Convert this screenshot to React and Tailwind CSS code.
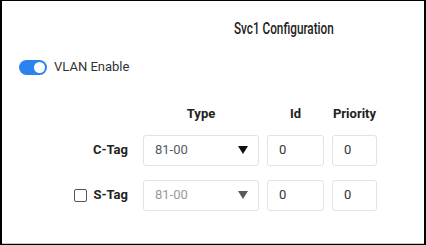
import { useState } from 'react';

function Toggle({ on }) {
  return (
    <div className={`w-[28px] h-[15px] rounded-full flex items-center px-[2px] ${on ? 'bg-[#2b83f0] justify-end' : 'bg-gray-300 justify-start'}`}>
      <div className="w-[11px] h-[11px] rounded-full bg-white" />
    </div>
  );
}

function Select({ value, disabled }) {
  return (
    <div className="w-[116px] h-[31px] border border-[#e2e2e2] rounded-[3px] flex items-center justify-between pl-[11px] pr-[10px]">
      <span className={`text-[13px] ${disabled ? 'text-[#9a9a9a]' : 'text-[#555a63]'}`}>{value}</span>
      <svg width="10" height="8" viewBox="0 0 10 8">
        <path d="M0 0 L10 0 L5 8 Z" fill={disabled ? '#5a5a5a' : '#111'} />
      </svg>
    </div>
  );
}

function Box({ value, w }) {
  return (
    <div className={`${w} h-[31px] border border-[#e2e2e2] rounded-[3px] flex items-center pl-[11px] text-[13px] text-[#333]`}>
      {value}
    </div>
  );
}

export default function App() {
  const [stag] = useState(false);

  return (
    <div className="w-[426px] h-[245px] bg-white font-['Roboto',sans-serif] border-l-2 border-r-2 border-t border-b border-black">
      <div className="h-full flex flex-col border-b border-[#c8c8c8]">
        <div className="pl-[232px] pt-[16px] h-[48px]">
          <span className="inline-block origin-left scale-x-[0.69] font-['Roboto',sans-serif] font-medium text-[17px] leading-[20px] text-[#222] whitespace-nowrap">
            Svc1 Configuration
          </span>
        </div>

        <div className="flex items-center gap-[7px] pl-[17px] h-[36px]">
          <Toggle on />
          <span className="text-[13px] text-[#333]">VLAN Enable</span>
        </div>

        <div className="flex pt-[19px] text-[13px] font-bold text-[#222]">
          <div className="w-[141px]" />
          <div className="w-[116px] text-center">Type</div>
          <div className="w-[8px]" />
          <div className="w-[57px] text-center">Id</div>
          <div className="w-[8px]" />
          <div className="w-[45px] text-center">Priority</div>
        </div>

        <div className="flex flex-col gap-[14px] pt-[11px]">
          <div className="flex items-center gap-[8px]">
            <div className="w-[133px] text-right pr-[7px] text-[13px] font-bold text-[#222]">C-Tag</div>
            <Select value="81-00" />
            <Box value="0" w="w-[57px]" />
            <Box value="0" w="w-[45px]" />
          </div>
          <div className="flex items-center gap-[8px]">
            <div className="w-[133px] flex items-center justify-end gap-[6px] pr-[7px] text-[13px] font-bold text-[#222]">
              <div className={`w-[13px] h-[13px] rounded-[2px] border border-[#555] ${stag ? 'bg-[#2b83f0]' : 'bg-white'}`} />
              <span>S-Tag</span>
            </div>
            <Select value="81-00" disabled />
            <Box value="0" w="w-[57px]" />
            <Box value="0" w="w-[45px]" />
          </div>
        </div>
      </div>
    </div>
  );
}
